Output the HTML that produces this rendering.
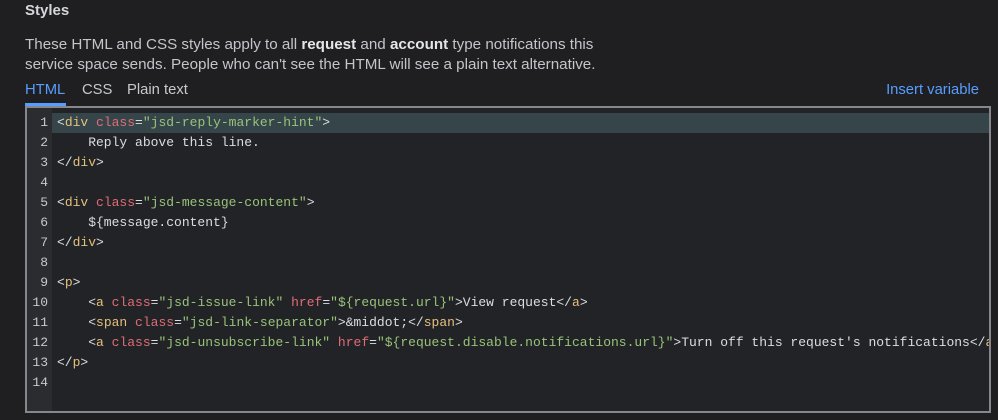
<!DOCTYPE html>
<html><head><style>
body{margin:0;width:998px;height:420px;background:#1f1f21;font-family:"Liberation Sans",sans-serif;color:#c7c9cf;overflow:hidden;position:relative}
.h{position:absolute;left:25px;top:2px;font-weight:bold;font-size:15px;color:#d4d6db}
.p{position:absolute;left:25px;top:35px;font-size:15.2px;line-height:20px;color:#c3c5cb}
.p b{color:#e4e6ea}
.tabs{position:absolute;left:25px;top:82px;font-size:14.8px}
.tabs span{position:absolute;white-space:nowrap}
.ins{position:absolute;right:19px;top:82px;font-size:14.8px;color:#579dff}
.ul{position:absolute;left:25px;top:103px;width:41px;height:3px;background:#579dff}
.ed{position:absolute;left:25px;top:106px;width:962px;height:303px;border:2px solid #85878c;background:#222327;overflow:hidden}
.g{position:absolute;left:0;top:0;width:25px;height:100%;background:#2b2c30}
.hl{position:absolute;left:25px;top:5px;right:0;height:20px;background:#364549}
.code{position:absolute;left:0;top:5px;font-family:"Liberation Mono",monospace;font-size:13px;line-height:20px;white-space:pre;color:#dcdde0}
.ln{display:inline-block;width:21px;text-align:right;color:#c8c9cc;margin-right:9px}
.t{color:#e5c07b}.a{color:#e06c75}.s{color:#98c379}
</style></head><body>
<div class="h">Styles</div>
<div class="p">These HTML and CSS styles apply to all <b>request</b> and <b>account</b> type notifications this<br>service space sends. People who can't see the HTML will see a plain text alternative.</div>
<div class="tabs"><span style="left:0;color:#579dff">HTML</span><span style="left:57px">CSS</span><span style="left:102px">Plain text</span></div>
<div class="ins">Insert variable</div>
<div class="ul"></div>
<div class="ed"><div class="g"></div><div class="hl"></div>
<div class="code"><span class="ln">1</span>&lt;<span class="t">div</span> <span class="a">class</span>=<span class="s">"jsd-reply-marker-hint"</span>&gt;
<span class="ln">2</span>    Reply above this line.
<span class="ln">3</span>&lt;/<span class="t">div</span>&gt;
<span class="ln">4</span>
<span class="ln">5</span>&lt;<span class="t">div</span> <span class="a">class</span>=<span class="s">"jsd-message-content"</span>&gt;
<span class="ln">6</span>    ${message.content}
<span class="ln">7</span>&lt;/<span class="t">div</span>&gt;
<span class="ln">8</span>
<span class="ln">9</span>&lt;<span class="t">p</span>&gt;
<span class="ln">10</span>    &lt;<span class="t">a</span> <span class="a">class</span>=<span class="s">"jsd-issue-link"</span> <span class="a">href</span>=<span class="s">"${request.url}"</span>&gt;View request&lt;/<span class="t">a</span>&gt;
<span class="ln">11</span>    &lt;<span class="t">span</span> <span class="a">class</span>=<span class="s">"jsd-link-separator"</span>&gt;&amp;middot;&lt;/<span class="t">span</span>&gt;
<span class="ln">12</span>    &lt;<span class="t">a</span> <span class="a">class</span>=<span class="s">"jsd-unsubscribe-link"</span> <span class="a">href</span>=<span class="s">"${request.disable.notifications.url}"</span>&gt;Turn off this request's notifications&lt;/<span class="t">a</span>&gt;
<span class="ln">13</span>&lt;/<span class="t">p</span>&gt;
<span class="ln">14</span>
</div></div>
</body></html>
